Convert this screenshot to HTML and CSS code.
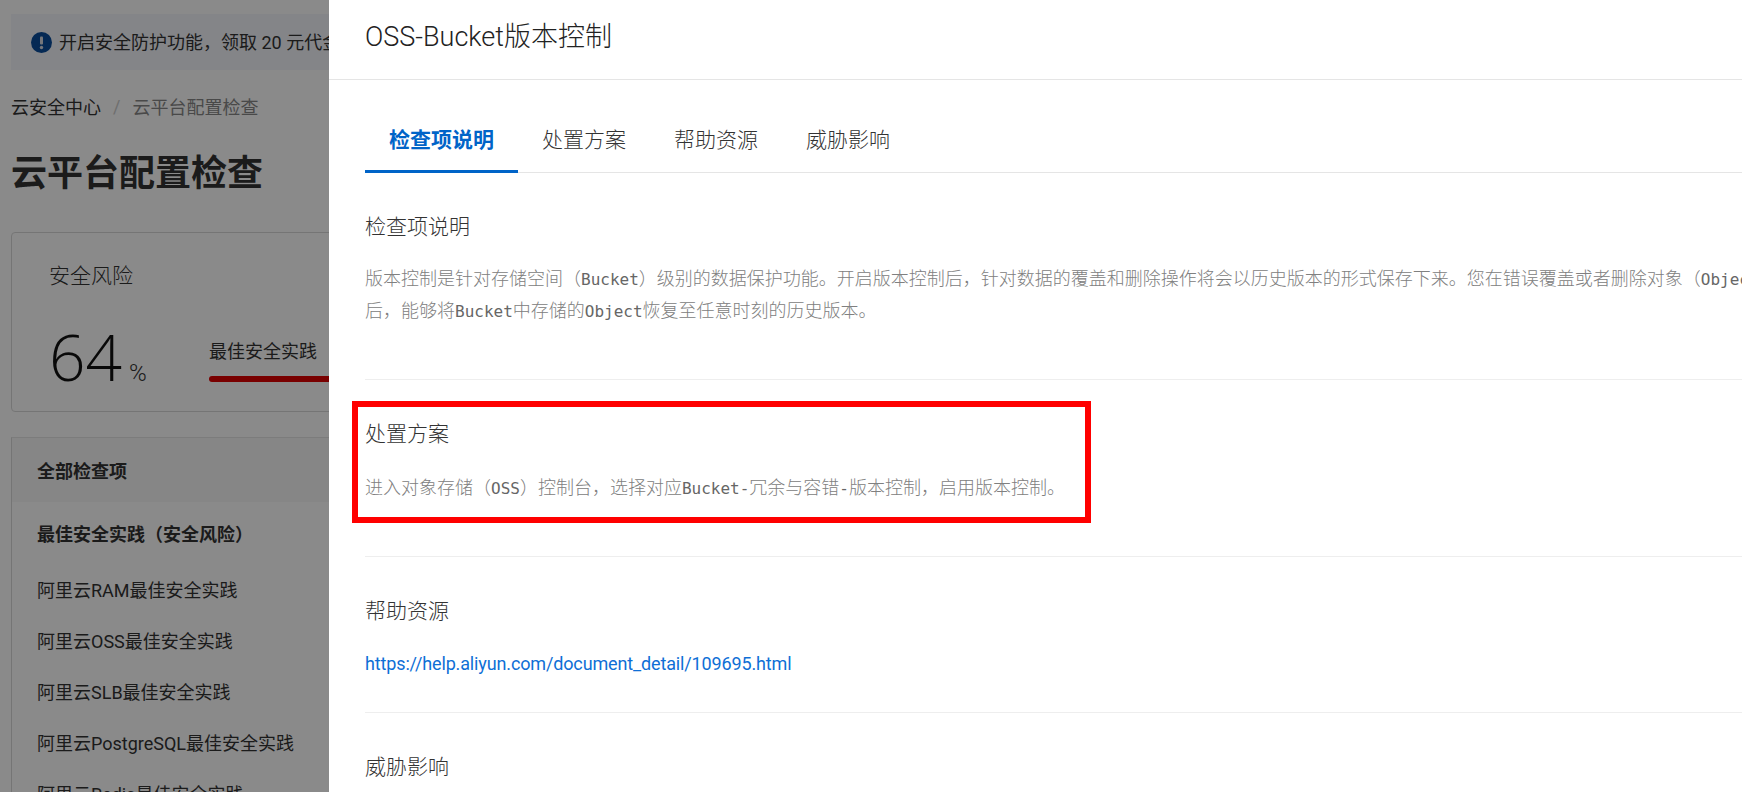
FILE: index.html
```html
<!DOCTYPE html>
<html lang="zh-CN">
<head>
<meta charset="utf-8">
<title>云平台配置检查</title>
<link rel="stylesheet" href="styles.css">
</head>
<body>
<div class="page">
  <div class="banner">
    <svg class="banner-icon" viewBox="0 0 21 21" width="21" height="21"><circle cx="10.5" cy="10.5" r="10.5" fill="#0a4d9c"/><rect x="9" y="4.5" width="3" height="8" rx="1" fill="#d8dbe2"/><circle cx="10.5" cy="15.5" r="1.7" fill="#d8dbe2"/></svg>
    <span>开启安全防护功能，领取 20 元代金券</span>
  </div>
  <nav class="crumbs"><span>云安全中心</span><i>/</i><span class="crumb-now">云平台配置检查</span></nav>
  <h1 class="page-title">云平台配置检查</h1>
  <section class="risk-card">
    <div class="risk-label">安全风险</div>
    <div class="risk-row">
      <div class="risk-score"><b>64</b><span>%</span></div>
      <div class="risk-item">
        <div>最佳安全实践</div>
        <div class="risk-bar"></div>
      </div>
    </div>
  </section>
  <section class="list">
    <div class="list-head">全部检查项</div>
    <div class="list-group">最佳安全实践（安全风险）</div>
    <div class="list-row">阿里云RAM最佳安全实践</div>
    <div class="list-row">阿里云OSS最佳安全实践</div>
    <div class="list-row">阿里云SLB最佳安全实践</div>
    <div class="list-row">阿里云PostgreSQL最佳安全实践</div>
    <div class="list-row">阿里云Redis最佳安全实践</div>
  </section>
</div>
<div class="mask"></div>
<aside class="drawer">
  <header class="drawer-head">OSS-Bucket版本控制</header>
  <div class="drawer-body">
    <div class="tabs">
      <span class="tab active">检查项说明</span>
      <span class="tab">处置方案</span>
      <span class="tab">帮助资源</span>
      <span class="tab">威胁影响</span>
    </div>
    <section class="block">
      <h3>检查项说明</h3>
      <p>版本控制是针对存储空间（<span class="code">Bucket</span>）级别的数据保护功能。开启版本控制后，针对数据的覆盖和删除操作将会以历史版本的形式保存下来。您在错误覆盖或者删除对象（<span class="code">Object</span>）<br>后，能够将<span class="code">Bucket</span>中存储的<span class="code">Object</span>恢复至任意时刻的历史版本。</p>
    </section>
    <section class="block">
      <h3>处置方案</h3>
      <p>进入对象存储（<span class="code">OSS</span>）控制台，选择对应<span class="code">Bucket-</span>冗余与容错<span class="code">-</span>版本控制，启用版本控制。</p>
    </section>
    <section class="block">
      <h3>帮助资源</h3>
      <a class="link" href="#">https://help.aliyun.com/document_detail/109695.html</a>
    </section>
    <section class="block">
      <h3>威胁影响</h3>
    </section>
  </div>
  <div class="highlight"></div>
</aside>
</body>
</html>
```
FILE: styles.css
```css
* { box-sizing: border-box; }
html, body { margin: 0; height: 100%; overflow: hidden; background: #fff; }
body { font-family: Roboto, "Noto Sans CJK SC", sans-serif; font-size: 18px; color: #333; width: 1742px; height: 792px; position: relative; }

.page { width: 329px; height: 792px; overflow: hidden; padding: 14px 0 0 11px; white-space: nowrap; }
.banner { display: flex; align-items: center; gap: 7px; width: 1200px; height: 56px; padding: 0 0 2px 20px; background: #f4f6fb; color: #333; }
.banner-icon { flex: none; margin-top: 2px; }
.crumbs { display: flex; align-items: center; height: 36px; margin-top: 18px; }
.crumbs i { font-style: normal; color: #ccc; margin: 0 12px; }
.crumb-now { color: #888; }
.page-title { margin: 26px 0 0; font-size: 36px; line-height: 48px; font-weight: 700; color: #333; }
.risk-card { margin-top: 34px; width: 1200px; height: 180px; border: 1px solid #d9d9d9; border-radius: 4px; padding: 26px 37px; }
.risk-label { font-size: 21px; line-height: 34px; font-weight: 300; }
.risk-row { display: flex; align-items: flex-start; margin-top: 28px; }
.risk-score { width: 160px; height: 72px; line-height: 72px; }
.risk-score b { font-family: "Open Sans", sans-serif; font-weight: 300; font-size: 64px; color: #111; }
.risk-score span { font-size: 24px; font-weight: 300; margin-left: 7px; }
.risk-item { line-height: 30px; width: 900px; margin-top: 16px; }
.risk-bar { margin-top: 9px; height: 6px; border-radius: 3px 0 0 3px; background: #e00000; }
.list { margin-top: 25px; width: 1200px; border-left: 1px solid #d9d9d9; border-top: 1px solid #e5e5e5; }
.list-head { height: 64px; line-height: 68px; padding-left: 25px; font-weight: 700; background: #f7f7f7; }
.list-group { padding-left: 25px; height: 63px; line-height: 66px; font-weight: 700; }
.list-row { padding-left: 25px; height: 51px; line-height: 51px; }

.mask { position: absolute; inset: 0; background: rgba(0, 0, 0, .46); }
.drawer { position: absolute; left: 329px; top: 0; right: 0; bottom: 0; background: #fff; overflow: hidden; }
.drawer-head { height: 80px; border-bottom: 1px solid #e5e5e5; padding-left: 36px; font-size: 27px; line-height: 74px; font-weight: 300; color: #222; white-space: nowrap; }
.drawer-body { padding-left: 36px; }
.tabs { display: flex; height: 93px; padding-top: 38px; border-bottom: 1px solid #e5e5e5; font-size: 21px; }
.tab { padding: 0 24px; line-height: 44px; height: 55px; color: #333; font-weight: 300; }
.tab.active { color: #0064c8; font-weight: 700; border-bottom: 3px solid #0064c8; }
.block { padding: 36px 0 33px; border-bottom: 1px solid #eee; }
.block:last-child { border-bottom: 0; }
.block h3 { margin: 0 0 18px; font-size: 21px; font-weight: 300; line-height: 36px; color: #333; }
.block + .block h3 { margin-bottom: 20px; }
.block p { margin: 0 0 19px; line-height: 32px; font-weight: 300; color: #808080; white-space: nowrap; }
.code { font-family: "DejaVu Sans Mono", monospace; font-size: 16px; line-height: 1; font-weight: 400; color: #666; }
.link { display: block; margin: -1px 0; line-height: 32px; letter-spacing: -.14px; color: #0e6fd6; text-decoration: none; }
.highlight { position: absolute; left: 23px; top: 401px; width: 739px; height: 122px; border: 6px solid #f00; }
```
